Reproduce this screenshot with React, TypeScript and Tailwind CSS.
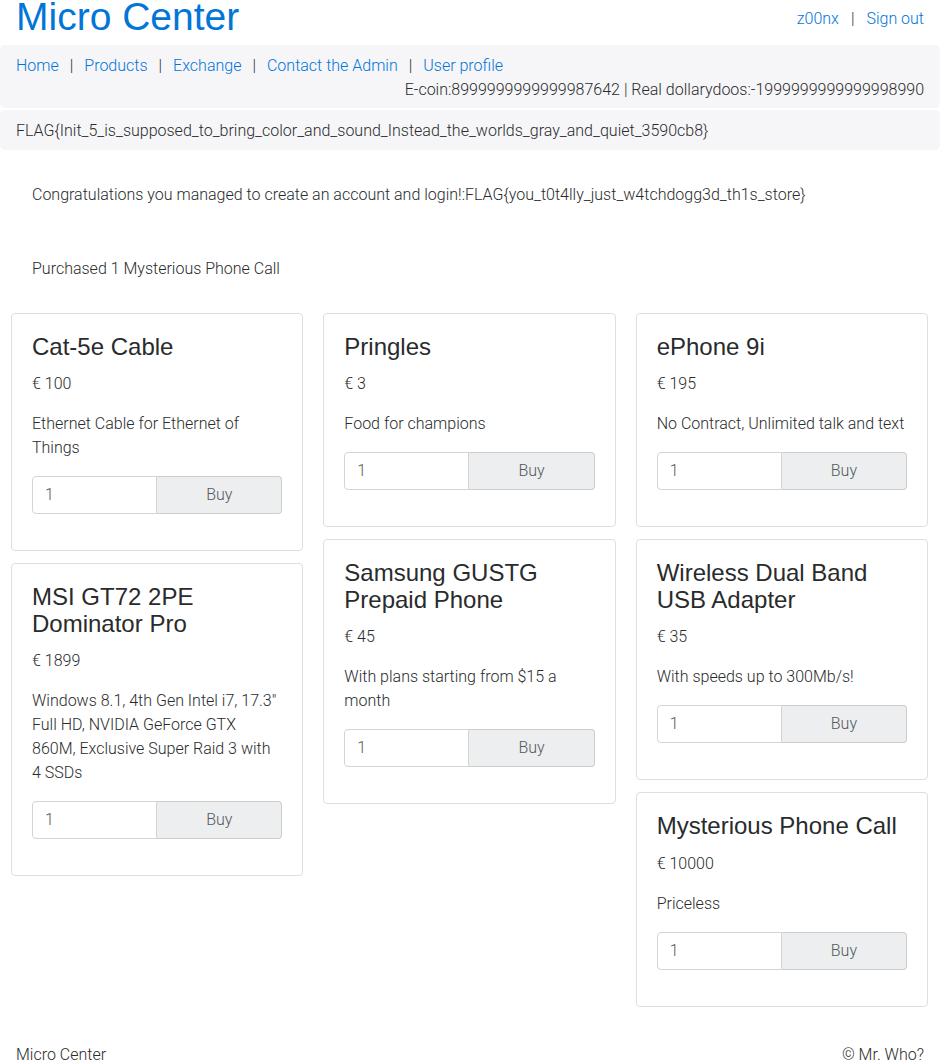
const PRODUCTS = [
  { name: "Cat-5e Cable", price: 100, desc: "Ethernet Cable for Ethernet of Things" },
  { name: "Pringles", price: 3, desc: "Food for champions" },
  { name: "ePhone 9i", price: 195, desc: "No Contract, Unlimited talk and text" },
  {
    name: "MSI GT72 2PE Dominator Pro",
    price: 1899,
    desc: 'Windows 8.1, 4th Gen Intel i7, 17.3" Full HD, NVIDIA GeForce GTX 860M, Exclusive Super Raid 3 with 4 SSDs',
  },
  { name: "Samsung GUSTG Prepaid Phone", price: 45, desc: "With plans starting from $15 a month" },
  { name: "Wireless Dual Band USB Adapter", price: 35, desc: "With speeds up to 300Mb/s!" },
  { name: "Mysterious Phone Call", price: 10000, desc: "Priceless" },
];

// card-columns style: fill column by column
const COLUMNS = [
  [PRODUCTS[0], PRODUCTS[3]],
  [PRODUCTS[1], PRODUCTS[4]],
  [PRODUCTS[2], PRODUCTS[5], PRODUCTS[6]],
];

const NAV = ["Home", "Products", "Exchange", "Contact the Admin", "User profile"];

function ProductCard({ p }: { p: (typeof PRODUCTS)[number] }) {
  return (
    <div className="border border-[#dfdfdf] rounded-[4px] bg-white px-5 pt-5 pb-5">
      <h4 className="font-['Liberation_Sans',Arial,sans-serif] text-[24px] leading-[26.4px] text-[#292b2c] mb-3">
        {p.name}
      </h4>
      <p className="mb-4">€ {p.price}</p>
      <p className="mb-4">{p.desc}</p>
      <div className="flex h-[38px] mb-4">
        <input
          defaultValue="1"
          className="w-1/2 min-w-0 border border-[#d4d4d4] rounded-l-[4px] px-3 text-[16px] text-[#55595c] outline-none bg-white"
        />
        <button className="w-1/2 border border-l-0 border-[#cdcdcd] rounded-r-[4px] bg-[#eceeef] text-[#55595c]">
          Buy
        </button>
      </div>
    </div>
  );
}

export default function App() {
  return (
    <div className="font-['Roboto',sans-serif] font-light text-[16px] leading-6 text-[#292b2c] bg-white min-h-[1060px]">
      {/* Header */}
      <div className="flex items-start justify-between px-4 h-[45px]">
        <h1 className="font-['Liberation_Sans',Arial,sans-serif] font-normal text-[39px] leading-[34px] text-[#0275d8]">
          Micro Center
        </h1>
        <div className="flex items-center gap-3 mt-[7px]">
          <a className="text-[#0275d8]">z00nx</a>
          <span>|</span>
          <a className="text-[#0275d8]">Sign out</a>
        </div>
      </div>

      {/* Nav block */}
      <div className="bg-[#f6f6f8] rounded-[5px] px-4 pt-[9px] pb-[6px]">
        <div className="flex items-center gap-[11px]">
          {NAV.map((n, i) => (
            <div key={n} className="flex items-center gap-[11px]">
              {i > 0 && <span>|</span>}
              <a className="text-[#0275d8]">{n}</a>
            </div>
          ))}
        </div>
        <div className="text-right">
          E-coin:8999999999999987642 | Real dollarydoos:-1999999999999998990
        </div>
      </div>

      {/* Flag block */}
      <div className="bg-[#f6f6f8] rounded-[5px] px-4 mt-[2px] pt-[9px] pb-[7px]">
        FLAG{"{"}Init_5_is_supposed_to_bring_color_and_sound_Instead_the_worlds_gray_and_quiet_3590cb8{"}"}
      </div>

      {/* Messages */}
      <div className="px-8 pt-[33px]">
        <p className="mb-[50px]">
          Congratulations you managed to create an account and login!:FLAG{"{"}you_t0t4lly_just_w4tchdogg3d_th1s_store{"}"}
        </p>
        <p>Purchased 1 Mysterious Phone Call</p>
      </div>

      {/* Products */}
      <div className="grid grid-cols-3 gap-x-5 pl-[11px] pr-[12px] mt-[32px] items-start">
        {COLUMNS.map((col, i) => (
          <div key={i} className="flex flex-col gap-3">
            {col.map((p) => (
              <ProductCard key={p.name} p={p} />
            ))}
          </div>
        ))}
      </div>

      {/* Footer */}
      <div className="flex justify-between px-4 mt-[36px]">
        <span>Micro Center</span>
        <span>© Mr. Who?</span>
      </div>
    </div>
  );
}
